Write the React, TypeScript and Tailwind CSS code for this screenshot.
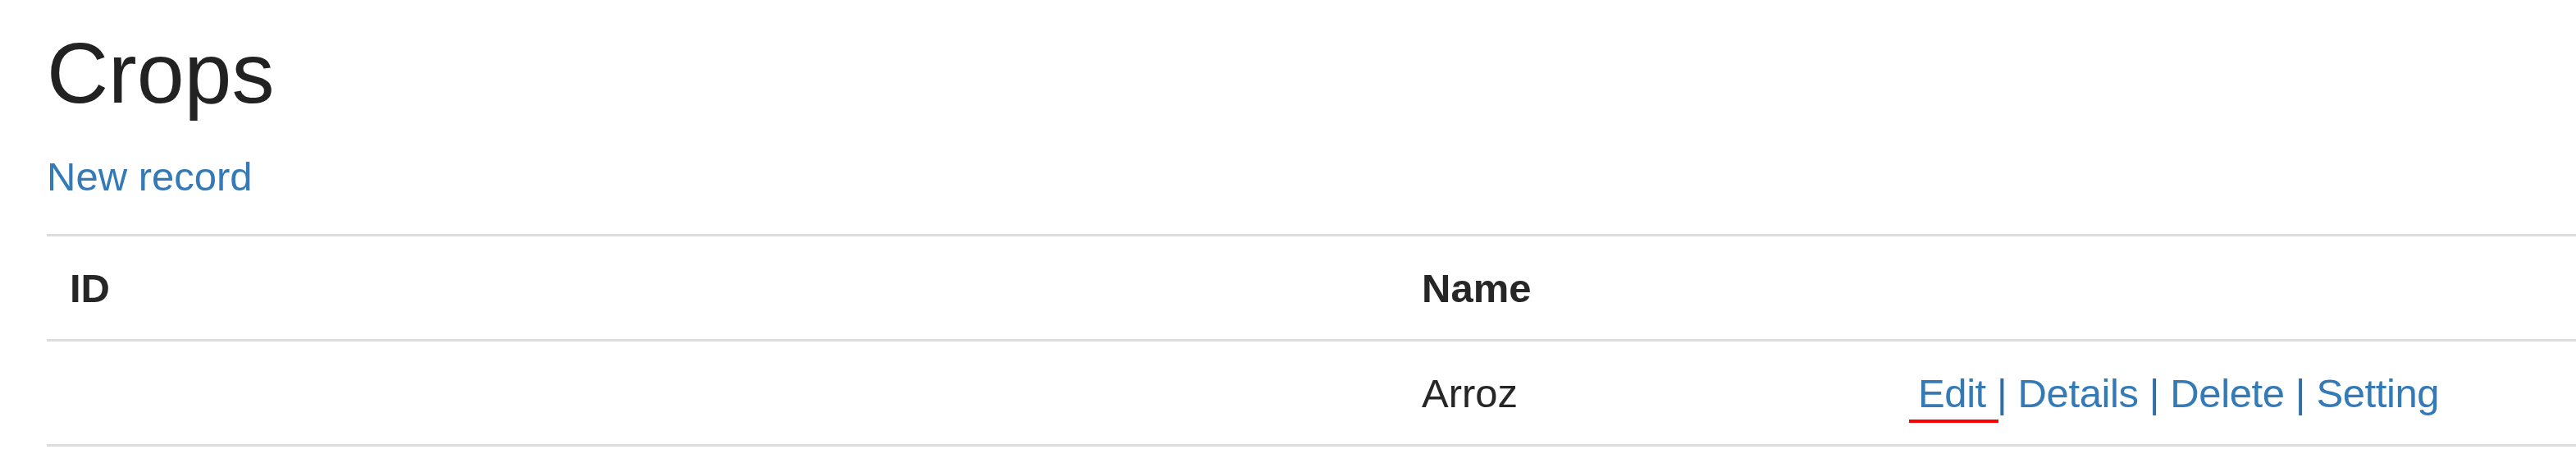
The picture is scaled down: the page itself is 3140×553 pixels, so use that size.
import React from 'react';

// ========================================================================
// Data

interface Crop {
  id: string;
  name: string;
}

const crops: Crop[] = [{ id: '', name: 'Arroz' }];

const actions = ['Edit', 'Details', 'Delete', 'Setting'];

// ========================================================================
// Row

const cell = 'pt-[28px] pb-[27px] px-[28px] leading-[70px] h-[125px]';

const CropRow: React.FC<{ crop: Crop }> = ({ crop }) => (
  <div className="grid grid-cols-[1648px_605px_1fr] border-t-[3px] border-[#dddddd]">
    <div className={cell}>{crop.id}</div>
    <div className={cell}>{crop.name}</div>
    <div className={`${cell} relative whitespace-nowrap tracking-[-0.4px] text-[#337ab7]`}>
      {actions.map((label, i) => (
        <React.Fragment key={label}>
          {i > 0 && <span className="text-[#2f6ea8]"> | </span>}
          <a href="#">{label}</a>
        </React.Fragment>
      ))}
      {/* red mark under the first link */}
      <span className="absolute left-[17px] top-[95px] h-[4px] w-[109px] bg-[#ff0000]" />
    </div>
  </div>
);

// ========================================================================
// Page

export default function App() {
  return (
    <div className="min-h-[553px] bg-white pl-[57px] pt-[32px] font-['Liberation_Sans',Arial,sans-serif] text-[49px] text-[#262626] overflow-hidden">
      <h2 className="text-[104px] leading-[115px] font-normal mb-[33px] text-[#222222]">Crops</h2>
      <p className="leading-[70px] mb-[35px]">
        <a href="#" className="text-[#337ab7]">New record</a>
      </p>

      <div>
        <div className="grid grid-cols-[1648px_605px_1fr] border-t-[3px] border-[#dddddd] font-bold">
          <div className={cell}>ID</div>
          <div className={cell}>Name</div>
          <div className={cell}></div>
        </div>
        {crops.map((c) => (
          <CropRow key={c.name} crop={c} />
        ))}
        <div className="border-t-[3px] border-[#dddddd]" />
      </div>
    </div>
  );
}
